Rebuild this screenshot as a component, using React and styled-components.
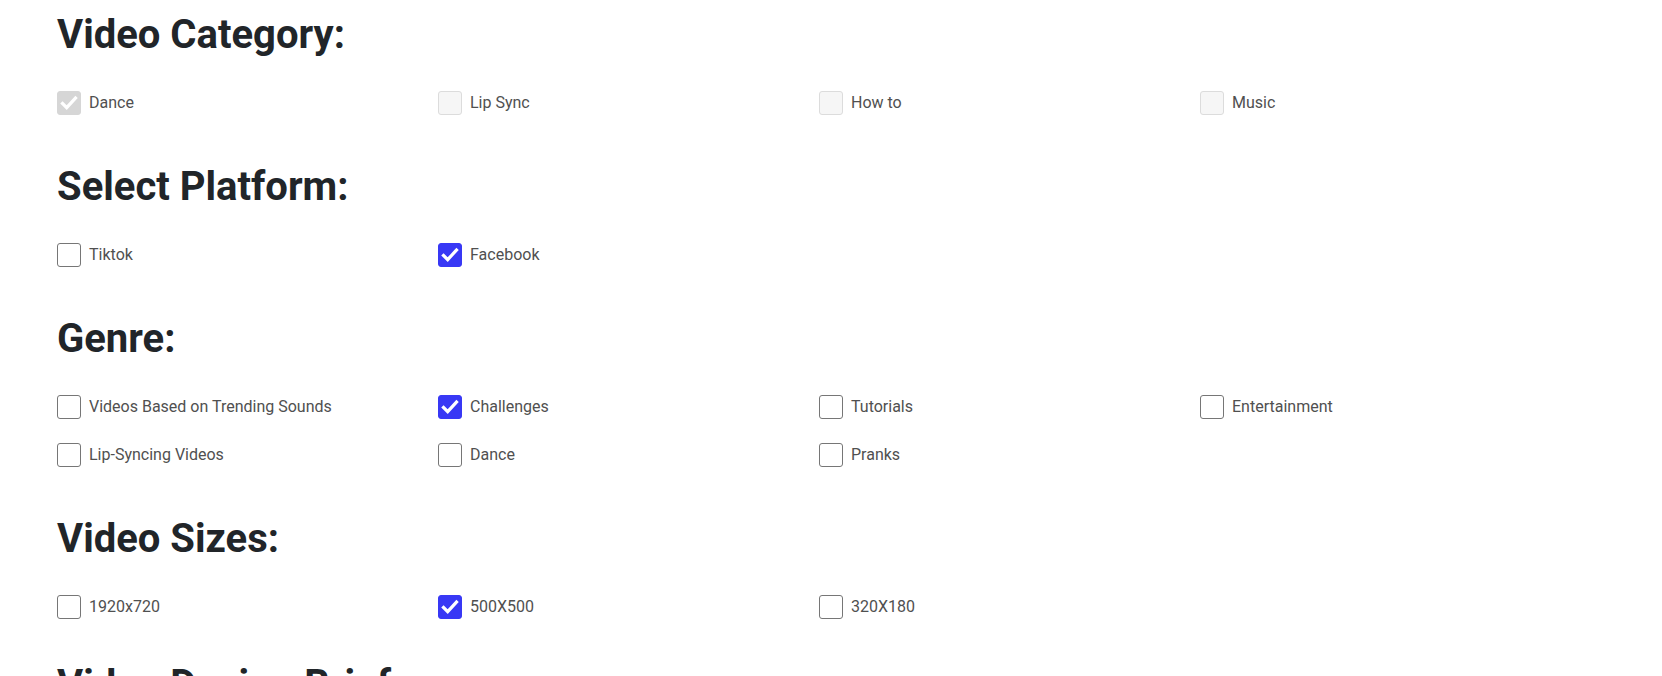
import React from "react";
import styled, { createGlobalStyle } from "styled-components";

const GlobalStyle = createGlobalStyle`
  html, body { margin: 0; padding: 0; background: #fff; }
  body { font-family: Roboto, "Liberation Sans", sans-serif; }
`;

const Page = styled.div`
  padding: 11px 0 0 57px;
`;

const Section = styled.section`
  margin-bottom: ${p => (p.$tight ? 42 : 48)}px;
`;

const Heading = styled.h2`
  margin: 0 0 32px;
  font-family: Roboto, "Liberation Sans", sans-serif;
  font-size: 40px;
  line-height: 48px;
  font-weight: 700;
  color: #212529;
`;

const Options = styled.div`
  display: grid;
  grid-template-columns: repeat(4, 381px);
  row-gap: 24px;
`;

const Option = styled.label`
  display: flex;
  align-items: center;
  gap: 8px;
  font-size: 16px;
  line-height: 24px;
  color: #505050;
`;

const Box = styled.span`
  box-sizing: border-box;
  width: 24px;
  height: 24px;
  flex: none;
  display: flex;
  align-items: center;
  justify-content: center;
  border-radius: 3px;
  border: 1px solid
    ${p =>
      p.$disabled
        ? p.$checked ? "#d6d6d6" : "#dcdcdc"
        : p.$checked ? "#3838f5" : "#767676"};
  background: ${p =>
    p.$disabled
      ? p.$checked ? "#d6d6d6" : "#f6f6f6"
      : p.$checked ? "#3838f5" : "#fff"};
`;

const check = (
  <svg width="22" height="22" viewBox="0 0 22 22" fill="none">
    <path d="M4.5 11.5l4.2 4.2L17.5 6" stroke="#fff" strokeWidth="3.2" strokeLinecap="square" />
  </svg>
);

const sections = [
  {
    title: "Video Category:",
    items: [
      { label: "Dance", checked: true, disabled: true },
      { label: "Lip Sync", disabled: true },
      { label: "How to", disabled: true },
      { label: "Music", disabled: true },
    ],
  },
  {
    title: "Select Platform:",
    items: [{ label: "Tiktok" }, { label: "Facebook", checked: true }],
  },
  {
    title: "Genre:",
    items: [
      { label: "Videos Based on Trending Sounds" },
      { label: "Challenges", checked: true },
      { label: "Tutorials" },
      { label: "Entertainment" },
      { label: "Lip-Syncing Videos" },
      { label: "Dance" },
      { label: "Pranks" },
    ],
  },
  {
    title: "Video Sizes:",
    tight: true,
    items: [
      { label: "1920x720" },
      { label: "500X500", checked: true },
      { label: "320X180" },
    ],
  },
];

const App = () => (
  <>
    <GlobalStyle />
    <Page>
      {sections.map(s => (
        <Section key={s.title} $tight={s.tight}>
          <Heading>{s.title}</Heading>
          <Options>
            {s.items.map(it => (
              <Option key={it.label}>
                <Box $checked={it.checked} $disabled={it.disabled}>
                  {it.checked && check}
                </Box>
                <span>{it.label}</span>
              </Option>
            ))}
          </Options>
        </Section>
      ))}
      <Section>
        <Heading>Video Design Brief:</Heading>
      </Section>
    </Page>
  </>
);

export default App;
